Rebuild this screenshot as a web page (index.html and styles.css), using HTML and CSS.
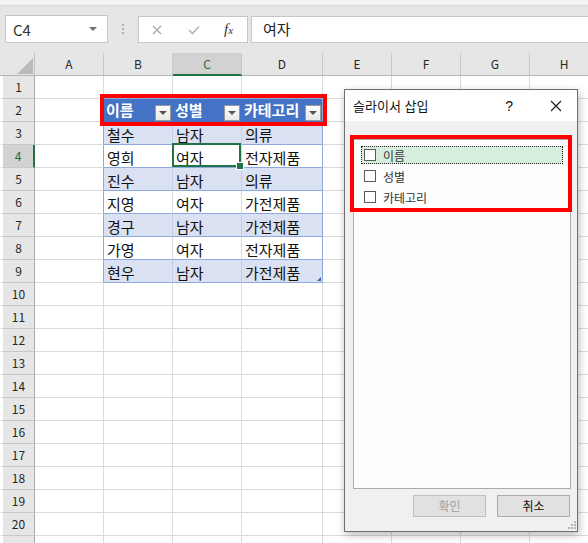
FILE: index.html
```html
<!DOCTYPE html>
<html lang="ko">
<head>
<meta charset="utf-8">
<title>슬라이서 삽입</title>
<link rel="stylesheet" href="styles.css">
</head>
<body>
<div class="app">
  <div class="toolbar">
    <div class="namebox"><span>C4</span><span class="nb-arrow"></span></div>
    <div class="grip"><i></i><i></i><i></i></div>
    <div class="fxbox">
      <svg class="ic-x" width="10" height="10" viewBox="0 0 10 10"><path d="M1 1L9 9M9 1L1 9" stroke="#a8a8a8" stroke-width="1.3"/></svg>
      <svg class="ic-ok" width="12" height="10" viewBox="0 0 12 10"><path d="M1 5L4.5 8.5L11 1.5" fill="none" stroke="#b5b5b5" stroke-width="1.6"/></svg>
      <span class="fx">f<span class="fxx">x</span></span>
    </div>
    <div class="formula">여자</div>
  </div>

  <div class="sheet">
    <div class="corner"><span class="tri"></span></div>
    <div class="ch">A</div><div class="ch">B</div><div class="ch sel">C</div><div class="ch">D</div><div class="ch">E</div><div class="ch">F</div><div class="ch">G</div><div class="ch">H</div>

    <div class="rh">1</div><div></div><div class="above"></div><div class="above"></div><div class="above"></div><div></div><div></div><div></div><div></div>

    <div class="rh">2</div><div class="pre"></div>
    <div class="th"><span>이름</span><span class="dd"></span></div>
    <div class="th"><span>성별</span><span class="dd"></span></div>
    <div class="th tr"><span>카테고리</span><span class="dd"></span></div>
    <div></div><div></div><div></div><div></div>

    <div class="rh">3</div><div class="pre"></div><div class="tb">철수</div><div class="tb">남자</div><div class="tb tr">의류</div><div></div><div></div><div></div><div></div>
    <div class="rh sel">4</div><div class="pre"></div><div class="t">영희</div><div class="t active">여자</div><div class="t tr">전자제품</div><div></div><div></div><div></div><div></div>
    <div class="rh">5</div><div class="pre"></div><div class="tb">진수</div><div class="tb">남자</div><div class="tb tr">의류</div><div></div><div></div><div></div><div></div>
    <div class="rh">6</div><div class="pre"></div><div class="t">지영</div><div class="t">여자</div><div class="t tr">가전제품</div><div></div><div></div><div></div><div></div>
    <div class="rh">7</div><div class="pre"></div><div class="tb">경구</div><div class="tb">남자</div><div class="tb tr">가전제품</div><div></div><div></div><div></div><div></div>
    <div class="rh">8</div><div class="pre"></div><div class="t">가영</div><div class="t">여자</div><div class="t tr">전자제품</div><div></div><div></div><div></div><div></div>
    <div class="rh">9</div><div class="pre"></div><div class="tb">현우</div><div class="tb">남자</div><div class="tb tr last">가전제품</div><div></div><div></div><div></div><div></div>

    <div class="rh">10</div><div></div><div></div><div></div><div></div><div></div><div></div><div></div><div></div>
    <div class="rh">11</div><div></div><div></div><div></div><div></div><div></div><div></div><div></div><div></div>
    <div class="rh">12</div><div></div><div></div><div></div><div></div><div></div><div></div><div></div><div></div>
    <div class="rh">13</div><div></div><div></div><div></div><div></div><div></div><div></div><div></div><div></div>
    <div class="rh">14</div><div></div><div></div><div></div><div></div><div></div><div></div><div></div><div></div>
    <div class="rh">15</div><div></div><div></div><div></div><div></div><div></div><div></div><div></div><div></div>
    <div class="rh">16</div><div></div><div></div><div></div><div></div><div></div><div></div><div></div><div></div>
    <div class="rh">17</div><div></div><div></div><div></div><div></div><div></div><div></div><div></div><div></div>
    <div class="rh">18</div><div></div><div></div><div></div><div></div><div></div><div></div><div></div><div></div>
    <div class="rh">19</div><div></div><div></div><div></div><div></div><div></div><div></div><div></div><div></div>
    <div class="rh">20</div><div></div><div></div><div></div><div></div><div></div><div></div><div></div><div></div>
    <div class="rh"></div><div></div><div></div><div></div><div></div><div></div><div></div><div></div><div></div>
  </div>

  <div class="dialog">
    <div class="titlebar">
      <span class="title">슬라이서 삽입</span>
      <span class="help">?</span>
      <svg class="close" width="12" height="12" viewBox="0 0 12 12"><path d="M1 1L11 11M11 1L1 11" stroke="#222" stroke-width="1.2"/></svg>
    </div>
    <div class="dbody">
      <div class="list">
        <div class="item focus"><span class="cb"></span><span>이름</span></div>
        <div class="item"><span class="cb"></span><span>성별</span></div>
        <div class="item"><span class="cb"></span><span>카테고리</span></div>
      </div>
      <div class="buttons">
        <div class="btn disabled">확인</div>
        <div class="btn">취소</div>
      </div>
    </div>
    <svg class="resize" width="8" height="8" viewBox="0 0 8 8"><g fill="#b4b4b4"><rect x="6" y="0" width="2" height="2"/><rect x="3" y="3" width="2" height="2"/><rect x="6" y="3" width="2" height="2"/><rect x="0" y="6" width="2" height="2"/><rect x="3" y="6" width="2" height="2"/><rect x="6" y="6" width="2" height="2"/></g></svg>
  </div>

  <div class="mark mark-header"></div>
  <div class="mark mark-list"></div>
</div>
</body>
</html>
```

FILE: styles.css
```css
* { box-sizing: border-box; }
html, body { margin: 0; padding: 0; background: #fff; }
body {
  font-family: "Noto Sans CJK KR", "Noto Sans", sans-serif;
  color: #000;
  overflow: hidden;
}
.app {
  position: relative;
  width: 588px;
  height: 543px;
  overflow: hidden;
}

/* ---------- formula toolbar ---------- */
.toolbar {
  height: 53px;
  background: #e6e6e6;
  border-top: 5px solid #f3f3f3;
  box-shadow: inset 0 1px 0 #d8d8d8;
  display: flex;
  align-items: flex-start;
  padding: 10px 0 0 5px;
}
.namebox {
  width: 103px;
  height: 28px;
  flex: none;
  background: #fff;
  border: 1px solid #c6c6c6;
  display: flex;
  align-items: center;
  justify-content: space-between;
  padding: 0 10px 0 7px;
  font-size: 15px;
  color: #333;
}
.nb-arrow {
  width: 0;
  height: 0;
  border-left: 4px solid transparent;
  border-right: 4px solid transparent;
  border-top: 4px solid #707070;
}
.grip {
  width: 30px;
  height: 28px;
  flex: none;
  display: flex;
  flex-direction: column;
  align-items: center;
  justify-content: center;
  gap: 2px;
}
.grip i { display: block; width: 2px; height: 2px; background: #b0b0b0; }
.fxbox {
  width: 110px;
  height: 27px;
  flex: none;
  margin-top: 1px;
  background: #fff;
  border: 1px solid #c6c6c6;
  display: flex;
  align-items: center;
}
.ic-x { margin-left: 13px; }
.ic-ok { margin-left: 26px; margin-top: 1px; }
.fx {
  margin-left: 24px;
  font-family: "Liberation Serif", serif;
  font-style: italic;
  font-size: 15px;
  color: #333;
  line-height: 1;
}
.fxx { font-size: 11px; }
.formula {
  flex: 1;
  height: 27px;
  margin: 1px 0 0 3px;
  background: #fff;
  border: 1px solid #c6c6c6;
  border-right: 0;
  padding-left: 11px;
  font-size: 15px;
  line-height: 24px;
  color: #222;
}

/* ---------- sheet grid ---------- */
.sheet {
  display: grid;
  grid-template-columns: 35px 69px 69px 69px 81px 69px 69px 69px 69px;
  grid-auto-rows: 23px;
}
.sheet > div {
  border-right: 1px solid #dadada;
  border-bottom: 1px solid #dadada;
  font-size: 15px;
  line-height: 21px;
  white-space: nowrap;
  overflow: visible;
}
.sheet > .corner {
  background: #e6e6e6;
  border-right: 1px solid #bdbdbd;
  border-bottom: 1px solid #b5b5b5;
  display: flex;
  align-items: flex-end;
  justify-content: flex-end;
  padding: 0 1px 1px 0;
}
.tri {
  width: 0;
  height: 0;
  border-left: 16px solid transparent;
  border-bottom: 16px solid #bababa;
}
.sheet > .ch {
  background: #e6e6e6;
  border-right: 1px solid #c8c8c8;
  border-bottom: 1px solid #b5b5b5;
  text-align: center;
  font-size: 12px;
  line-height: 22px;
  color: #262626;
}
.sheet > .ch.sel {
  background: #d2d2d2;
  border-bottom: 2px solid #217346;
  color: #1e6b3f;
}
.sheet > .rh {
  background: #e6e6e6;
  border-left: 3px solid #fff;
  border-right: 1px solid #a9a9a9;
  border-bottom: 1px solid #c8c8c8;
  text-align: center;
  font-size: 12px;
  line-height: 22px;
  color: #262626;
}
.sheet > .rh.sel {
  background: #d2d2d2;
  border-right: 2px solid #217346;
  color: #1e6b3f;
}

/* table */
.sheet > .above { border-bottom-color: #8ea9db; }
.sheet > .pre { border-right-color: #8ea9db; }
.sheet > .th {
  background: #4472c4;
  color: #fff;
  font-weight: bold;
  border-right-color: #4472c4;
  border-bottom-color: #4472c4;
  display: flex;
  justify-content: space-between;
  padding: 0 1px 0 2px;
  line-height: 22px;
}
.sheet > .th.tr { border-right-color: #8ea9db; }
.dd {
  align-self: flex-end;
  margin-bottom: 0;
  width: 16px;
  height: 16px;
  flex: none;
  background: linear-gradient(#fdfdfd, #e9e9e9);
  border: 1px solid #9a9a9a;
  position: relative;
}
.dd::after {
  content: "";
  position: absolute;
  left: 3px;
  top: 5px;
  border-left: 4px solid transparent;
  border-right: 4px solid transparent;
  border-top: 4px solid #555;
}
.sheet > .t,
.sheet > .tb {
  padding: 2px 0 0 3px;
  border-bottom-color: #8ea9db;
  color: #111;
}
.sheet > .tb { background: #d9e1f2; border-right-color: #c3cfe8; }
.sheet > .t { border-right-color: #d6dbe6; }
.sheet > .tr { border-right-color: #8ea9db; }
.sheet > .active { position: relative; }
.sheet > .active::before {
  content: "";
  position: absolute;
  left: -1px;
  top: -2px;
  right: 0;
  bottom: 0;
  border: 2px solid #217346;
}
.sheet > .active::after {
  content: "";
  position: absolute;
  right: -3px;
  bottom: -3px;
  width: 6px;
  height: 6px;
  background: #217346;
  border: 1px solid #fff;
}
.sheet > .last { position: relative; }
.sheet > .last::after {
  content: "";
  position: absolute;
  right: 1px;
  bottom: 1px;
  border-left: 4px solid transparent;
  border-bottom: 4px solid #3f5ea8;
}

/* ---------- dialog ---------- */
.dialog {
  position: absolute;
  left: 344px;
  top: 89px;
  width: 234px;
  height: 443px;
  border: 1px solid #6f6f6f;
  background: #f0f0f0;
  box-shadow: 1px 3px 8px rgba(0, 0, 0, 0.28);
  display: flex;
  flex-direction: column;
}
.titlebar {
  height: 31px;
  flex: none;
  background: #fff;
  display: flex;
  align-items: center;
  padding-left: 8px;
}
.title { flex: 1; font-size: 13px; color: #111; }
.help { font-size: 14px; color: #111; margin-right: 37px; font-family: "Liberation Sans", sans-serif; }
.close { margin-right: 15px; }
.dbody {
  flex: 1;
  display: flex;
  flex-direction: column;
  padding: 18px 6px 14px 8px;
}
.list {
  flex: 1;
  background: #fdfdfd;
  border: 1px solid #ababab;
  padding: 6px 7px 0 7px;
}
.item {
  height: 18px;
  margin-bottom: 3px;
  display: flex;
  align-items: center;
  gap: 7px;
  padding-left: 2px;
  font-size: 12px;
  color: #333;
  border: 1px solid transparent;
}
.item.focus {
  background: #d5eedd;
  border: 1px dotted #222;
}
.cb {
  width: 12px;
  height: 12px;
  border: 1px solid #5a5a5a;
  background: #fff;
  flex: none;
}
.buttons {
  display: flex;
  justify-content: flex-end;
  gap: 11px;
  margin-top: 6px;
  padding-right: 1px;
}
.btn {
  width: 73px;
  height: 22px;
  background: #e1e1e1;
  border: 1px solid #adadad;
  font-size: 12px;
  line-height: 20px;
  text-align: center;
  color: #111;
}
.btn.disabled { color: #a0a0a0; border-color: #bfbfbf; }
.resize { position: absolute; right: 1px; bottom: 2px; }

/* ---------- annotation marks ---------- */
.mark {
  position: absolute;
  border: 4px solid #ff0000;
}
.mark-header { left: 100px; top: 94px; width: 227px; height: 32px; }
.mark-list { left: 350px; top: 135px; width: 222px; height: 77px; }
```
